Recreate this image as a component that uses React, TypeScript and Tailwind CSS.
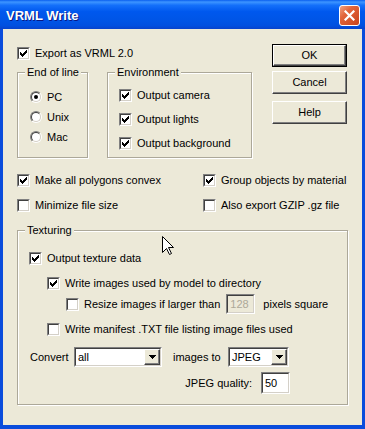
import React from "react";

function Check({ checked }: { checked?: boolean }) {
  return (
    <div className="w-[13px] h-[13px] shrink-0 border border-t-[#808080] border-l-[#808080] border-r-white border-b-white">
      <div className="w-full h-full bg-white border border-t-[#404040] border-l-[#404040] border-r-[#D4D0C8] border-b-[#D4D0C8] flex items-center justify-center">
        {checked && (
          <svg width="7" height="7" viewBox="0 0 7 7" shapeRendering="crispEdges">
            <path
              d="M0 2h1v3H0z M1 3h1v3H1z M2 4h1v3H2z M3 3h1v3H3z M4 2h1v3H4z M5 1h1v3H5z M6 0h1v3H6z"
              fill="#000"
            />
          </svg>
        )}
      </div>
    </div>
  );
}

function CheckRow({ checked, label }: { checked?: boolean; label: string }) {
  return (
    <div className="flex items-center gap-[5px] h-[13px]">
      <Check checked={checked} />
      <span className="leading-[13px] whitespace-nowrap">{label}</span>
    </div>
  );
}

function Radio({ checked, label }: { checked?: boolean; label: string }) {
  return (
    <div className="flex items-center gap-[5px] h-[20px]">
      <div className="w-[12px] h-[12px] shrink-0 rounded-full border border-t-[#808080] border-l-[#808080] border-r-white border-b-white">
        <div className="w-full h-full rounded-full bg-white border border-t-[#404040] border-l-[#404040] border-r-[#D4D0C8] border-b-[#D4D0C8] flex items-center justify-center">
          {checked && <div className="w-[4px] h-[4px] rounded-full bg-black" />}
        </div>
      </div>
      <span className="leading-[13px]">{label}</span>
    </div>
  );
}

function Group({
  label,
  className,
  children,
}: {
  label: string;
  className: string;
  children: React.ReactNode;
}) {
  return (
    <fieldset
      className={
        "border border-[#ACA899] shadow-[1px_1px_0_#ffffff,inset_1px_1px_0_#ffffff] " +
        className
      }
    >
      <legend className="ml-[7px] px-[2px] leading-[13px] bg-[#ECE9D8]">{label}</legend>
      {children}
    </fieldset>
  );
}

function Raised({ children, className }: { children?: React.ReactNode; className: string }) {
  return (
    <div
      className={
        "border border-t-white border-l-white border-r-[#404040] border-b-[#404040] shadow-[inset_-1px_-1px_0_#808080] bg-[#ECE9D8] flex items-center justify-center " +
        className
      }
    >
      {children}
    </div>
  );
}

function Btn({ label, def }: { label: string; def?: boolean }) {
  if (def) {
    return (
      <div className="w-[75px] h-[23px] border border-black">
        <Raised className="w-full h-full">{label}</Raised>
      </div>
    );
  }
  return <Raised className="w-[75px] h-[23px]">{label}</Raised>;
}

function Arrow() {
  return (
    <svg width="7" height="4" viewBox="0 0 7 4" shapeRendering="crispEdges">
      <path d="M0 0h7v1H0z M1 1h5v1H1z M2 2h3v1H2z M3 3h1v1H3z" fill="#000" />
    </svg>
  );
}

function Select({ value, className }: { value: string; className: string }) {
  return (
    <div
      className={
        "h-[20px] border border-t-[#808080] border-l-[#808080] border-r-white border-b-white " +
        className
      }
    >
      <div className="w-full h-full bg-white border border-t-[#404040] border-l-[#404040] border-r-[#D4D0C8] border-b-[#D4D0C8] flex items-center">
        <span className="flex-1 pl-[2px] leading-[13px]">{value}</span>
        <Raised className="w-[16px] h-[16px]">
          <Arrow />
        </Raised>
      </div>
    </div>
  );
}

function Input({
  value,
  disabled,
  className,
}: {
  value: string;
  disabled?: boolean;
  className: string;
}) {
  return (
    <div
      className={
        "border border-t-[#808080] border-l-[#808080] border-r-white border-b-white " + className
      }
    >
      <div
        className={
          "w-full h-full border border-t-[#404040] border-l-[#404040] border-r-[#D4D0C8] border-b-[#D4D0C8] flex items-center pl-[2px] leading-[13px] " +
          (disabled ? "bg-[#ECE9D8] text-[#ACA899]" : "bg-white text-black")
        }
      >
        {value}
      </div>
    </div>
  );
}

export default function App() {
  return (
    <div className="w-[365px] h-[429px] flex flex-col bg-[#0A4CDC] font-['Liberation_Sans',Arial,sans-serif] text-[11px] text-black select-none">
      {/* title bar */}
      <div className="h-[29px] shrink-0 flex items-center pl-[6px] pr-[5px] bg-[linear-gradient(to_bottom,#0A5FEF_0%,#3D95FF_7%,#1470FA_18%,#0058EE_40%,#0055E6_70%,#0150E0_88%,#0843CC_100%)]">
        <span className="mt-[2px] text-white font-bold text-[13px] leading-[16px] [text-shadow:1px_1px_0_#0A1883]">
          VRML Write
        </span>
        <div className="ml-auto mt-[2px] w-[21px] h-[21px] rounded-[3px] border border-white bg-[linear-gradient(135deg,#F0A283_0%,#E2643A_35%,#C9431C_100%)] flex items-center justify-center">
          <svg width="11" height="11" viewBox="0 0 11 11">
            <path d="M1.5 1.5L9.5 9.5M9.5 1.5L1.5 9.5" stroke="#fff" strokeWidth="2.2" strokeLinecap="square" />
          </svg>
        </div>
      </div>

      {/* client area */}
      <div className="relative flex-1 mx-[3px] mb-[4px] bg-[#ECE9D8] flex flex-col pl-[14px] pr-[15px]">
        <div className="flex">
          <div className="flex flex-col pt-[18px]">
            <CheckRow checked label="Export as VRML 2.0" />
            <div className="flex gap-[19px] mt-[6px]">
              <Group label="End of line" className="w-[71px] h-[92px]">
                <div className="flex flex-col pl-[12px] pt-[8px]">
                  <Radio checked label="PC" />
                  <Radio label="Unix" />
                  <Radio label="Mac" />
                </div>
              </Group>
              <Group label="Environment" className="w-[145px] h-[92px]">
                <div className="flex flex-col pl-[11px] pt-[4px]">
                  <div className="h-[24px] flex items-center">
                    <CheckRow checked label="Output camera" />
                  </div>
                  <div className="h-[24px] flex items-center">
                    <CheckRow checked label="Output lights" />
                  </div>
                  <div className="h-[24px] flex items-center">
                    <CheckRow checked label="Output background" />
                  </div>
                </div>
              </Group>
            </div>
          </div>
          <div className="ml-auto flex flex-col pt-[15px]">
            <Btn def label="OK" />
            <div className="mt-[4px]">
              <Btn label="Cancel" />
            </div>
            <div className="mt-[7px]">
              <Btn label="Help" />
            </div>
          </div>
        </div>

        <div className="flex mt-[16px]">
          <div className="w-[186px] flex flex-col">
            <CheckRow checked label="Make all polygons convex" />
            <div className="mt-[12px]">
              <CheckRow label="Minimize file size" />
            </div>
          </div>
          <div className="flex flex-col">
            <CheckRow checked label="Group objects by material" />
            <div className="mt-[12px]">
              <CheckRow label="Also export GZIP .gz file" />
            </div>
          </div>
        </div>

        <Group label="Texturing" className="w-[331px] h-[181px] mt-[12px]">
          <div className="flex flex-col pl-[11px] pt-[15px]">
            <CheckRow checked label="Output texture data" />
            <div className="pl-[18px] mt-[12px]">
              <CheckRow checked label="Write images used by model to directory" />
            </div>
            <div className="pl-[37px] mt-[4px] h-[20px] flex items-center">
              <Check />
              <span className="ml-[5px] leading-[13px] whitespace-nowrap">Resize images if larger than</span>
              <Input disabled value="128" className="ml-[6px] w-[29px] h-[20px]" />
              <span className="ml-[8px] leading-[13px] whitespace-nowrap">pixels square</span>
            </div>
            <div className="pl-[18px] mt-[9px]">
              <CheckRow label="Write manifest .TXT file listing image files used" />
            </div>
            <div className="w-[261px] mt-[11px] flex flex-col items-end">
              <div className="w-full flex items-center">
                <span className="w-[45px] pl-[1px] leading-[13px]">Convert</span>
                <Select value="all" className="w-[88px]" />
                <span className="ml-[11px] w-[55px] leading-[13px]">images to</span>
                <Select value="JPEG" className="w-[61px]" />
              </div>
              <div className="mt-[5px] flex items-center">
                <span className="leading-[13px]">JPEG quality:</span>
                <Input value="50" className="ml-[9px] w-[29px] h-[22px]" />
              </div>
            </div>
          </div>
        </Group>

        {/* mouse cursor */}
        <svg
          width="13"
          height="20"
          viewBox="0 0 13 20"
          className="absolute left-[159px] top-[207px]"
          shapeRendering="crispEdges"
        >
          <path
            d="M0.5 0.5V16.5L4.5 12.5L7.5 18.5L9.5 17.5L6.5 11.5H11.5Z"
            fill="#fff"
            stroke="#000"
            strokeWidth="1"
            shapeRendering="auto"
          />
        </svg>
      </div>
    </div>
  );
}
